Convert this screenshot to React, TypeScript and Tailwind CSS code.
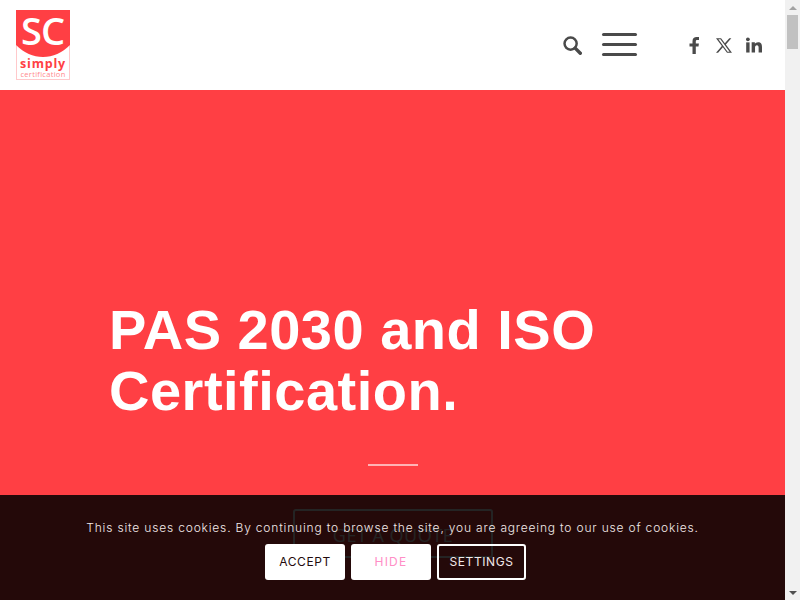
import React from "react";

function Logo() {
  return (
    <svg width="54" height="70" viewBox="0 0 54 70" className="block overflow-visible">
      <rect x="0.5" y="0.5" width="53" height="69" fill="#fff" stroke="#ffc9cb" />
      <path d="M0 0H54V35C46 43 37 47 27 47C17 47 8 43 0 35Z" fill="#ff3f44" />
      <text x="26.5" y="35" textAnchor="middle" fill="#fff" fontFamily="'Open Sans', sans-serif" fontWeight="600" fontSize="38" letterSpacing="-1">SC</text>
      <text x="27" y="58" textAnchor="middle" fill="#ff3f44" fontFamily="'Open Sans', sans-serif" fontWeight="700" fontSize="12.5" letterSpacing="0.8">simply</text>
      <text x="27" y="67" textAnchor="middle" fill="#ff8a8e" fontFamily="'Open Sans', sans-serif" fontSize="7.5" letterSpacing="0.3">certification</text>
    </svg>
  );
}

function Search() {
  return (
    <svg width="19" height="19" viewBox="0 0 20 20" fill="none" stroke="#4a4a4a" className="block">
      <circle cx="8" cy="8" r="6.4" strokeWidth="2.6" />
      <path d="M12.8 12.8L18.2 18.2" strokeWidth="3.6" strokeLinecap="round" />
    </svg>
  );
}

function Facebook() {
  return (
    <svg width="11" height="17" viewBox="0 0 10 17" fill="#4a4a4a" className="block">
      <path d="M3 17V9.5H0V6.4H3V4.2C3 1.4 4.7 0 7.1 0C8.2 0 9.2.1 9.5.1V3H7.8C6.5 3 6.3 3.6 6.3 4.5V6.4H9.4L9 9.5H6.3V17Z" />
    </svg>
  );
}

function XLogo() {
  return (
    <svg width="16" height="15" viewBox="0 0 24 22" fill="#4a4a4a" className="block">
      <path fillRule="evenodd" d="M0 0H7.6L13.3 7.6L19.9 0H23L14.8 9.5L24 22H16.5L10.3 13.8L3.1 22H0L8.8 11.9ZM3.6 1.7L17.4 20.3H20.4L6.6 1.7Z" />
    </svg>
  );
}

function LinkedIn() {
  return (
    <svg width="16" height="16" viewBox="0 0 17 16" fill="#4a4a4a" className="block">
      <circle cx="2" cy="2" r="2" />
      <rect x="0.2" y="5.2" width="3.6" height="10.8" />
      <path d="M6 5.2H9.4V6.8C10 5.8 11.2 5 12.8 5C16 5 17 7 17 10V16H13.4V10.7C13.4 9.3 13 8.2 11.6 8.2C10.2 8.2 9.6 9.3 9.6 10.7V16H6Z" />
    </svg>
  );
}

export default function App() {
  return (
    <div className="flex w-[800px] h-[600px] overflow-hidden bg-white font-['Liberation_Sans',sans-serif]">
      <div className="relative w-[785px] h-[600px] flex flex-col">
        <header className="h-[90px] shrink-0 bg-white flex items-center pl-4 pr-[23px]">
          <Logo />
          <div className="ml-auto flex items-center">
            <Search />
            <div className="ml-5 w-[35px] flex flex-col gap-[7px] -translate-y-px">
              <div className="h-[3px] rounded-sm bg-[#4a4a4a]" />
              <div className="h-[3px] rounded-sm bg-[#4a4a4a]" />
              <div className="h-[3px] rounded-sm bg-[#4a4a4a]" />
            </div>
            <div className="ml-[52px] flex items-center">
              <Facebook />
              <div className="ml-4"><XLogo /></div>
              <div className="ml-[14px]"><LinkedIn /></div>
            </div>
          </div>
        </header>
        <section className="flex-1 bg-[#ff3f44] flex flex-col pt-[209px] pl-[109px]">
          <h1 className="w-[560px] text-white font-bold text-[56px] leading-[61px] tracking-[0.5px]">
            PAS 2030 and ISO Certification.
          </h1>
          <div className="mt-[43px] ml-[259px] w-[50px] h-[2px] bg-[#ffb3b5]" />
          <div className="mt-[43px] ml-[184px] w-[200px] h-[49px] rounded-[3px] border-2 border-white flex items-center justify-center text-white text-[18px] tracking-[0.5px] pt-[3px] font-['Open_Sans',sans-serif]">
            GET A QUOTE
          </div>
        </section>
        <div className="absolute left-0 right-0 bottom-0 h-[105px] bg-black/[0.86] flex flex-col items-center pt-[25px] font-['Inter',sans-serif]">
          <p className="text-[12px] leading-4 tracking-[0.82px] font-light text-[#f3e9ea] whitespace-nowrap">
            This site uses cookies. By continuing to browse the site, you are agreeing to our use of cookies.
          </p>
          <div className="mt-2 ml-[6px] flex gap-[6px] text-[12px] tracking-[0.6px]">
            <div className="w-20 h-9 rounded-[3px] bg-white text-[#230a0d] flex items-center justify-center">ACCEPT</div>
            <div className="w-20 h-9 rounded-[3px] bg-white text-[#ff8ec6] tracking-[1.2px] flex items-center justify-center">HIDE</div>
            <div className="w-[89px] h-9 rounded-[3px] border-2 border-white text-[#f3e9ea] flex items-center justify-center">SETTINGS</div>
          </div>
        </div>
      </div>
      <div className="w-[15px] h-[600px] bg-[#f1f1f1] flex flex-col items-center">
        <div className="h-[15px] w-full flex items-center justify-center">
          <div className="w-0 h-0 border-x-[4px] border-x-transparent border-b-[4px] border-b-[#a3a3a3]" />
        </div>
        <div className="w-[11px] h-[34px] bg-[#c1c1c1]" />
        <div className="mt-auto h-[15px] w-full flex items-center justify-center">
          <div className="w-0 h-0 border-x-[4px] border-x-transparent border-t-[4px] border-t-[#505050]" />
        </div>
      </div>
    </div>
  );
}
